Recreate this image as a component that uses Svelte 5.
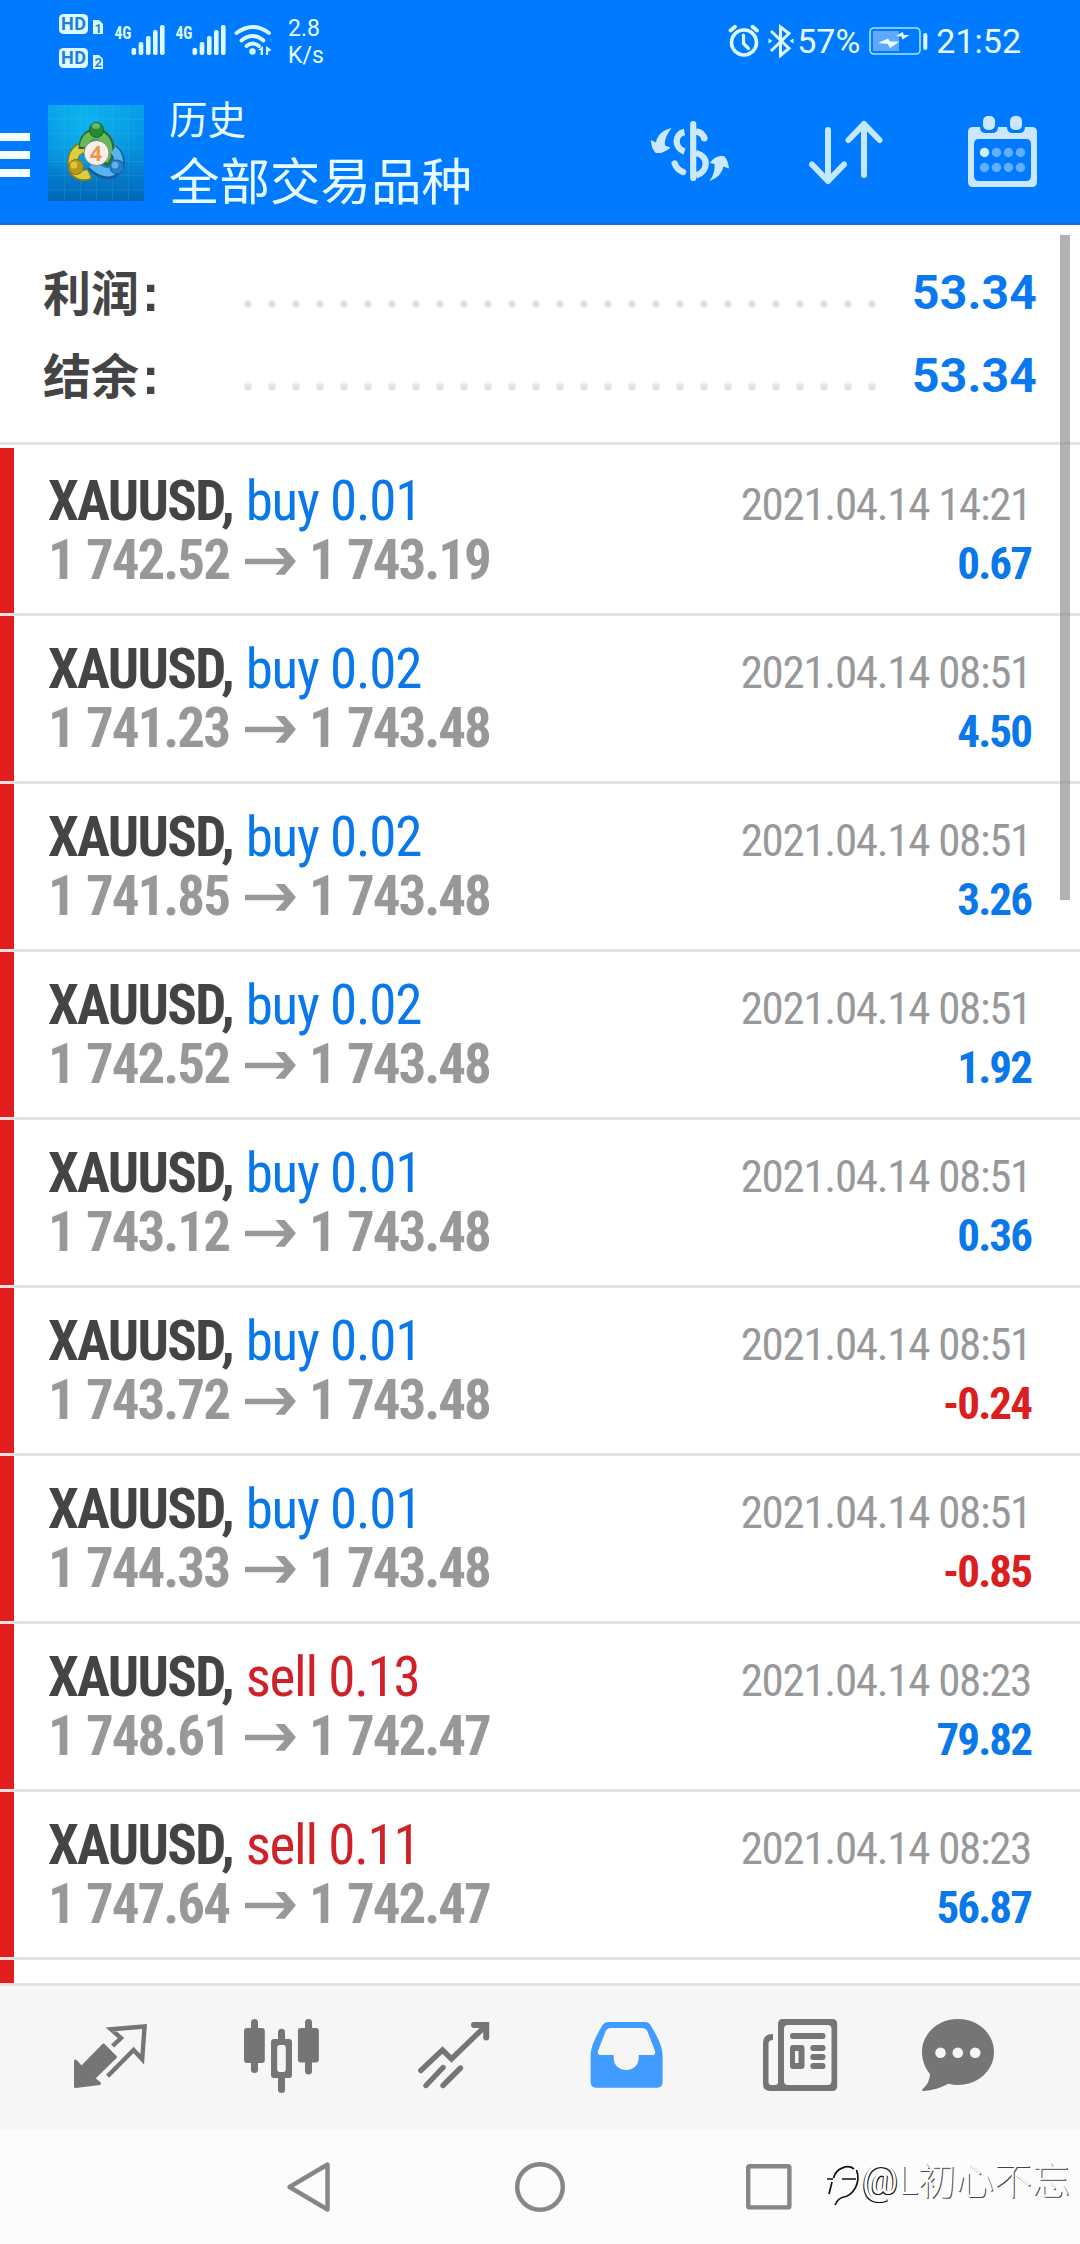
<script>
    const deals = [
        { symbol: 'XAUUSD', side: 'buy', volume: '0.01', open: '1 742.52', close: '1 743.19', time: '2021.04.14 14:21', profit: '0.67' },
        { symbol: 'XAUUSD', side: 'buy', volume: '0.02', open: '1 741.23', close: '1 743.48', time: '2021.04.14 08:51', profit: '4.50' },
        { symbol: 'XAUUSD', side: 'buy', volume: '0.02', open: '1 741.85', close: '1 743.48', time: '2021.04.14 08:51', profit: '3.26' },
        { symbol: 'XAUUSD', side: 'buy', volume: '0.02', open: '1 742.52', close: '1 743.48', time: '2021.04.14 08:51', profit: '1.92' },
        { symbol: 'XAUUSD', side: 'buy', volume: '0.01', open: '1 743.12', close: '1 743.48', time: '2021.04.14 08:51', profit: '0.36' },
        { symbol: 'XAUUSD', side: 'buy', volume: '0.01', open: '1 743.72', close: '1 743.48', time: '2021.04.14 08:51', profit: '-0.24' },
        { symbol: 'XAUUSD', side: 'buy', volume: '0.01', open: '1 744.33', close: '1 743.48', time: '2021.04.14 08:51', profit: '-0.85' },
        { symbol: 'XAUUSD', side: 'sell', volume: '0.13', open: '1 748.61', close: '1 742.47', time: '2021.04.14 08:23', profit: '79.82' },
        { symbol: 'XAUUSD', side: 'sell', volume: '0.11', open: '1 747.64', close: '1 742.47', time: '2021.04.14 08:23', profit: '56.87' }
    ];

    const totals = [
        { label: '利润', value: '53.34' },
        { label: '结余', value: '53.34' }
    ];

    const dots = Array.from({ length: 27 }, (_, i) => 4 + i * 24);
    const bars = [
        { x: 81.5, h: 7 },
        { x: 88.7, h: 13 },
        { x: 96, h: 19 },
        { x: 103, h: 25 },
        { x: 110, h: 30 }
    ];
</script>

<div class="screen">
    <header>
        <div class="status">
            <svg class="signals" width="226" height="66" viewBox="0 0 226 66" fill="#dcfaff">
                <rect x="9" y="6" width="29" height="20" rx="4.5" />
                <rect x="9" y="40" width="29" height="20" rx="4.5" />
                <text class="hd" x="11" y="22.3" textLength="25">HD</text>
                <text class="hd" x="11" y="56.3" textLength="25">HD</text>
                <path d="M43 12h6l4 4v10h-10zM43 47h6l4 4v10h-10z" />
                <text class="sim" x="44.6" y="24.6">1</text>
                <text class="sim" x="44.6" y="59.4">2</text>
                {#each [0, 61] as shift}
                    <text class="net" x={64.5 + shift} y="30.5" textLength="17" lengthAdjust="spacingAndGlyphs">4G</text>
                    {#each bars as bar}
                        <rect x={bar.x + shift} y={47 - bar.h} width="4.6" height={bar.h} rx="1.8" />
                    {/each}
                {/each}
                <circle cx="202.5" cy="43.5" r="3.2" />
                <path d="M186.5 25q16-12 32.500 0M191.500 32.500q11-9 22 0M196.500 38q6-5 12.500 0" fill="none" stroke="#dcfaff" stroke-width="3.8" stroke-linecap="round" />
                <path d="M208 42l5-4v9h-2.400v-5zM216 38v9h2v-3l3.500-2z" />
            </svg>
            <div class="speed">2.8<br />K/s</div>
            <div class="statusRight">
                <svg width="32" height="34" viewBox="0 0 32 34" fill="none" stroke="#dcfaff" stroke-linecap="round">
                    <circle cx="16" cy="18.500" r="12.500" stroke-width="3.600" />
                    <path d="M15.500 11v8.500l5 5" stroke-width="3.200" stroke-linejoin="round" />
                    <path d="M2.500 6.500l4.500-3.700M29 6.500l-4.500-3.700" stroke-width="3.800" />
                </svg>
                <svg class="bluetooth" width="26" height="34" viewBox="0 0 26 34" fill="none" stroke="#dcfaff" stroke-width="3">
                    <path d="M3 7l18 17.500-8.500 7V3l8.500 6.500L3 27" />
                    <path d="M.5 14.500l4 2.500-4 2.500zM25.500 14.500l-4 2.500 4 2.500z" fill="#dcfaff" stroke="none" />
                </svg>
                <span>57%</span>
                <svg class="battery" width="60" height="28" viewBox="0 0 60 28" fill="none">
                    <rect x="1" y="1" width="50" height="26" rx="4" stroke="#a8e4ff" stroke-width="1.600" />
                    <rect x="4" y="4" width="26" height="20" fill="#5ea8ff" />
                    <rect x="54.300" y="6" width="4" height="17" rx="2" fill="#dcfaff" />
                    <path d="M9 16l10-4.500 2 3h9.500l-9.500 6.500-2-4zM27 9l6.500-4 1.500 3h5.500l-7 4.500-1-3z" fill="#ecffff" />
                </svg>
                <span>21:52</span>
            </div>
        </div>
        <div class="appbar">
            <div class="menu"><i></i><i></i><i></i></div>
            <svg class="logo" width="96" height="96" viewBox="0 0 96 96">
                <defs>
                    <linearGradient id="sea" x1="0" y1="0" x2="0" y2="1">
                        <stop offset="0" stop-color="#079fea" />
                        <stop offset=".5" stop-color="#068fdb" />
                        <stop offset="1" stop-color="#0267b8" />
                    </linearGradient>
                    <radialGradient id="glow" cx=".4" cy=".2" r=".6">
                        <stop offset="0" stop-color="#12bdf0" stop-opacity=".7" />
                        <stop offset="1" stop-color="#12bdf0" stop-opacity="0" />
                    </radialGradient>
                </defs>
                <rect width="96" height="96" fill="url(#sea)" />
                <rect width="96" height="96" fill="url(#glow)" />
                <path d="M16.500 0v96M32.500 0v96M48.500 0v96M64.500 0v96M80.500 0v96M0 14.500h96M0 28.500h96M0 42.500h96M0 56.500h96M0 70.500h96M0 84.500h96" stroke="#4cc4f5" stroke-opacity=".16" />
                <g fill="none">
                    <path d="M41 43c-13-2-17 7-16 17 0 9 9 13 17 9" stroke="#7d7b16" stroke-width="11" />
                    <path d="M41 43c-12-2-17 7-16 17 0 8 9 12 16 9" stroke="#dccf3f" stroke-width="8.500" />
                    <path d="M36 44c0-11 5-15 12-15 10 0 14 10 13 19-1 5-4 8-6 11" stroke="#286b35" stroke-width="11" />
                    <path d="M36 42c1-9 5-12 12-12 9 0 13 9 12 18l-4 8" stroke="#67ba55" stroke-width="8.500" />
                    <path d="M65 45c6 4 8 13 4 19-8 9-18 4-26-4" stroke="#165a96" stroke-width="11" />
                    <path d="M65 45c6 4 7 13 4 18-8 8-18 3-25-4" stroke="#57b4ed" stroke-width="8.500" />
                </g>
                <ellipse cx="48.500" cy="25" rx="7" ry="7.500" fill="#278a31" stroke="#1b5f2a" />
                <ellipse cx="48" cy="21" rx="4" ry="3" fill="#82c985" opacity=".7" />
                <circle cx="28" cy="62" r="7.500" fill="#bb9918" stroke="#87700f" />
                <circle cx="26" cy="60" r="3.500" fill="#e6cf52" opacity=".8" />
                <circle cx="69" cy="62" r="7" fill="#227fc8" stroke="#145a98" />
                <circle cx="67" cy="60" r="3.500" fill="#7cc4f2" opacity=".7" />
                <circle cx="48.500" cy="48" r="12.500" fill="#f2f0ec" stroke="#8d8b76" />
                <text class="four" x="48" y="55.500" text-anchor="middle">4</text>
            </svg>
            <div class="titles">
                <div class="small">历史</div>
                <div class="big">全部交易品种</div>
            </div>
            <div class="actions">
                <svg width="110" height="90" viewBox="0 0 110 90" fill="#cbe9fd">
                    <path d="M53.200 19v54" stroke="#cbe9fd" stroke-width="6.200" stroke-linecap="round" />
                    <path d="M44.500 27C34 29 34 43 44.500 46.500M56 26.500q7 1 8.500 7.500M56 48c13 3 13 18 0 22.500" fill="none" stroke="#cbe9fd" stroke-width="6.400" />
                    <path d="M64.300 33v.2M34.700 58.500C36 62 39 65.500 43 67" fill="none" stroke="#cbe9fd" stroke-width="6.400" stroke-linecap="round" />
                    <path d="M31.500 23C22 25 17 31 16 37.500L11 35c0 5 2 11 5 13h5c3-1 7-3 9.500-5.500L25 40.500c-1-6.500 3-12.500 6.500-17.500z" />
                    <path d="M69 76c4-4 6-10 5.500-17L70 58c3-5 8-7.500 14-7 3 3 4.500 7 5 12.500l-5.500-2C82 68 77 74 69 76z" />
                </svg>
                <svg width="90" height="90" viewBox="800 105 90 90" fill="none" stroke="#c2e9ff" stroke-width="6" stroke-linecap="round" stroke-linejoin="round">
                    <path d="M828 130v51M812 164.500l16 16.500 16-16.500M864 175v-51M848.500 140l15.500-16 15.500 16" />
                </svg>
                <svg width="70" height="90" viewBox="968 105 70 90" fill="#cbe6ff">
                    <path fill-rule="evenodd" d="M973 127h7q0 6 6 6h6q6 0 6-6h9q0 6 6 6h6q6 0 6-6h7q5 0 5 5v50q0 5-5 5h-59q-5 0-5-5v-50q0-5 5-5zM979 139q-5 0-5 5v32q0 5 5 5h47q5 0 5-5v-32q0-5-5-5z" />
                    <rect x="983" y="116" width="12" height="14" rx="5" />
                    <rect x="1010" y="116" width="12" height="14" rx="5" />
                    {#each [984.5, 996.5, 1008.5, 1020.5] as x, i}
                        <circle cx={x} cy="152.500" r="4.700" fill={i === 0 ? '#cdf2ff' : '#5fb0ff'} />
                        <circle cx={x} cy="167.500" r="4.700" fill="#5fb0ff" />
                    {/each}
                </svg>
            </div>
        </div>
    </header>

    <main>
        <section class="summary">
            {#each totals as total}
                <div class="total">
                    <div class="label">{total.label}<b>:</b></div>
                    <svg width="632" height="8" fill="#e3e3e3">
                        {#each dots as x}
                            <circle cx={x} cy="4" r="3.800" />
                        {/each}
                    </svg>
                    <div class="amount">{total.value}</div>
                </div>
            {/each}
        </section>

        <section class="deals">
            {#each deals as deal}
                <div class="deal">
                    <div class="line">
                        <div class="name">
                            <b>{deal.symbol},</b> <span class={deal.side}>{deal.side} {deal.volume}</span>
                        </div>
                        <div class="time">{deal.time}</div>
                    </div>
                    <div class="line">
                        <div class="prices">
                            <span>{deal.open}</span>
                            <svg width="52" height="27" viewBox="0 0 52 27" fill="#98989a">
                                <path d="M30.300 0h9.300L51 13.300 39.600 26.700h-9.300l9.300-10.400H0v-5.600h39.600z" />
                            </svg>
                            <span>{deal.close}</span>
                        </div>
                        <div class="profit" class:loss={deal.profit.startsWith('-')}>{deal.profit}</div>
                    </div>
                </div>
            {/each}
            <div class="deal"></div>
        </section>
        <div class="scrollbar"></div>
    </main>

    <nav class="tabs">
        <svg width="96" height="96" fill="none" stroke="#757575">
            <path d="M13.500 51l6 6.500 22-22.500 12 12-22 21.500 6 5-24 3z" fill="#757575" stroke-width="3" stroke-linejoin="round" />
            <path d="M50.600 36l8.400-8-10-8.700 33.600-2.800-2.400 32.800-8.600-9.300-26 26.300" stroke-width="4.400" />
        </svg>
        <svg width="96" height="96" fill="#757575">
            <rect x="10" y="18" width="20.800" height="35" rx="3" />
            <rect x="17" y="9" width="7" height="54" rx="3.500" />
            <rect x="63.900" y="18" width="21" height="34.500" rx="3" />
            <rect x="71" y="9" width="7" height="55.500" rx="3.500" />
            <rect x="44" y="18.700" width="7" height="14" rx="3.500" />
            <rect x="44" y="64" width="7" height="19" rx="3.500" />
            <path fill-rule="evenodd" d="M40 29h15q3 0 3 3v33q0 3-3 3H40q-3 0-3-3V32q0-3 3-3zM45.500 35q-2.300 0-2.300 3v21q0 3 2.300 3h4q2.300 0 2.300-3V38q0-3-2.300-3z" />
        </svg>
        <svg width="96" height="96" fill="none" stroke="#757575" stroke-width="5.400" stroke-linecap="round">
            <path d="M14.800 60.500L36.500 40l9 9L80 15.500" stroke-linejoin="miter" />
            <path d="M68 15h12.200v12.500" stroke-width="6" />
            <path d="M20 75.500l17-18M37 75.500l17.500-17.500" />
        </svg>
        <svg width="96" height="96" fill="#409cff">
            <path fill-rule="evenodd" d="M31 12h36q4 0 6 4c6 10 11.600 20 11.600 30v26q0 5.700-5.600 5.700H18.200q-5.600 0-5.600-5.700V46c0-10 5.600-20 11.400-30q2-4 7-4zM33 18q-4 0-5.500 3.500L20 41q-1 4 3 4h12.700v3c0 16 25 16 25 0v-3H74q4 0 3-4l-7.500-19.500Q68 18 64 18z" />
        </svg>
        <svg width="96" height="96" fill="#757575">
            <path fill-rule="evenodd" d="M33 9h49.200q5 0 5 5v62q0 5-5 5H20q-7 0-7-7V33q0-9 10-9v6q-4.500 0-4.500 4v38q0 3 3 3H25q3 0 3-3V14q0-5 5-5zM38 15q-4 0-4 4v52q0 4 4 4h39.500q4 0 4-4V19q0-4-4-4z" />
            <rect x="40" y="23" width="35.500" height="6" rx="3" />
            <path fill-rule="evenodd" d="M43 35h8.500q3 0 3 3v18q0 3-3 3H43q-3 0-3-3V38q0-3 3-3zM45 41v12h3.500V41z" />
            <rect x="60.300" y="35" width="15.200" height="6" rx="3" />
            <rect x="60.300" y="44" width="15.200" height="6" rx="3" />
            <rect x="60.300" y="53" width="15.200" height="6" rx="3" />
        </svg>
        <svg width="96" height="96" fill="#757575">
            <path d="M48 9c20 0 36 14.500 36 33S68 75 48 75q-5 0-9.500-1.200C31 78 22 80.500 13.800 81c-2 0-2-1.600-.6-2.600C17.500 75 19.500 70 20 64 15 58 12 50.500 12 42 12 23.500 28 9 48 9z" />
            <circle cx="30.500" cy="42.700" r="5.300" fill="#f6f6f6" />
            <circle cx="47.800" cy="42.700" r="5.300" fill="#f6f6f6" />
            <circle cx="65.200" cy="42.700" r="5.300" fill="#f6f6f6" />
        </svg>
    </nav>

    <footer>
        <svg width="60" height="60" fill="none" stroke="#868686" stroke-width="4.400" stroke-linejoin="round">
            <path d="M10.500 30L48.500 7.500v45z" />
        </svg>
        <svg width="60" height="60" fill="none" stroke="#868686" stroke-width="4.400">
            <circle cx="30" cy="30" r="22.800" />
        </svg>
        <svg width="60" height="60" fill="none" stroke="#868686" stroke-width="4.400" stroke-linejoin="round">
            <rect x="7.200" y="9.200" width="41.200" height="41.200" rx="1.500" />
        </svg>
        <div class="watermark">
            <svg width="46" height="62" fill="none" stroke="#111" stroke-width="1.700">
                <path d="M11 31h6M17.500 30C20 20 32 16 38 21M26 31h14M16 34l-3 12M40.500 22C45 34 38 48 26 49.500M28 49q-6 1-9 8" />
            </svg>
            <span><b>@</b>L初心不忘</span>
        </div>
    </footer>
</div>

<style>
    :global(body) {
        background: #fff;
    }

    svg {
        display: block;
        flex: none;
    }

    .screen {
        width: 1080px;
        height: 2244px;
        display: flex;
        flex-direction: column;
        overflow: hidden;
        font-family: Roboto, "Noto Sans CJK SC", sans-serif;
    }

    header {
        height: 225px;
        box-sizing: border-box;
        background: #007aff;
        border-bottom: 2px solid #1a6fc4;
        color: #e8fdff;
        flex: none;
    }

    .status {
        display: flex;
        height: 82px;
        padding: 0 59px 0 50px;
    }

    .signals {
        margin-top: 8px;
    }

    .hd {
        font: 700 18px Roboto, sans-serif;
        fill: #1c80dc;
    }

    .sim {
        font: 700 13px Roboto, sans-serif;
        fill: #1c80dc;
    }

    .net {
        font: 700 19px "Roboto Condensed", Roboto, sans-serif;
    }

    .speed {
        margin: 15px 0 0 12px;
        font-size: 23px;
        line-height: 27px;
    }

    .statusRight {
        display: flex;
        align-items: center;
        height: 82px;
        margin-left: auto;
        font-size: 34px;
    }

    .statusRight span {
        line-height: 40px;
    }

    .bluetooth {
        margin: 0 3px 0 8px;
    }

    .battery {
        margin: 0 7px 0 9px;
    }

    .appbar {
        display: flex;
        height: 141px;
    }

    .menu {
        display: flex;
        flex-direction: column;
        gap: 10px;
        margin-top: 51px;
        width: 30px;
    }

    .menu i {
        height: 8px;
        background: #f4ffff;
    }

    .logo {
        margin: 23px 25px 0 18px;
    }

    .four {
        font: 700 21px "Open Sans", sans-serif;
        fill: #ee9648;
    }

    .small {
        margin-top: 18px;
        font-size: 38.5px;
        line-height: 42px;
    }

    .big {
        margin-top: 11px;
        font-size: 50.5px;
        line-height: 60px;
    }

    .actions {
        display: flex;
        margin: 23px 42px 0 auto;
    }

    .actions svg:nth-child(2) {
        margin: 0 78px 0 50px;
    }

    main {
        position: relative;
        flex: 1;
        display: flex;
        flex-direction: column;
        min-height: 0;
        background: #fff;
    }

    .summary {
        height: 220px;
        box-sizing: border-box;
        padding: 25px 43px 0 43px;
        border-bottom: 3px solid #e3e3e3;
        flex: none;
    }

    .total {
        display: flex;
        align-items: center;
        height: 83px;
    }

    .label {
        width: 201px;
        padding-top: 4px;
        font-size: 48px;
        font-weight: 700;
        line-height: 60px;
        color: #444;
    }

    .label b {
        margin-left: 3px;
        font-family: "Liberation Sans", sans-serif;
        font-size: 52px;
    }

    .total svg {
        margin-top: 25px;
    }

    .amount {
        margin-left: auto;
        padding-top: 2px;
        font-size: 48px;
        font-weight: 700;
        letter-spacing: 0.2px;
        color: #0a78f0;
    }

    .deals {
        flex: 1;
        min-height: 0;
        overflow: hidden;
        padding-top: 3px;
        font-family: "Roboto Condensed", Roboto, sans-serif;
    }

    .deal {
        height: 168px;
        box-sizing: border-box;
        padding: 24px 49px 0 48px;
        border-bottom: 3px solid #e3e3e3;
        background: linear-gradient(90deg, #e31e1e 14px, #fff 14px) no-repeat;
    }

    .line {
        display: flex;
        justify-content: space-between;
        align-items: baseline;
        height: 59px;
        line-height: 59px;
        font-size: 55px;
    }

    .name b {
        color: #444;
        letter-spacing: -1.7px;
    }

    .name span {
        letter-spacing: -1.2px;
    }

    .buy {
        color: #0a78e8;
    }

    .sell {
        color: #d02028;
    }

    .time, .profit {
        font-size: 45px;
        line-height: 50px;
    }

    .time {
        color: #98989a;
        letter-spacing: -1.3px;
    }

    .profit {
        font-weight: 700;
        letter-spacing: -1.9px;
        color: #0a78e8;
    }

    .profit.loss {
        color: #d9201f;
    }

    .prices {
        display: flex;
        align-items: baseline;
        font-weight: 700;
        letter-spacing: -2px;
        word-spacing: 1.5px;
        color: #98989a;
    }

    .prices svg {
        margin: 0 12px 10px 16px;
        transform: translateY(-4px);
    }

    .scrollbar {
        position: absolute;
        top: 10px;
        right: 10px;
        width: 10px;
        height: 665px;
        background: rgba(130, 130, 130, 0.62);
    }

    .tabs {
        display: flex;
        height: 147px;
        box-sizing: border-box;
        padding: 24px 62px 0 62px;
        border-top: 3px solid #e3e3e3;
        background: #f6f6f6;
        flex: none;
    }

    .tabs svg {
        margin-right: 76px;
    }

    .tabs svg:nth-child(5) {
        margin-right: 64px;
    }

    .tabs svg:last-child {
        margin-right: 0;
    }

    footer {
        position: relative;
        display: flex;
        align-items: center;
        gap: 171px;
        height: 114px;
        padding-left: 279px;
        background: #fcfcfc;
        flex: none;
    }

    .watermark {
        position: absolute;
        left: 816px;
        top: 18px;
        display: flex;
        width: 264px;
        white-space: nowrap;
        font: 300 38px/60px "Noto Sans CJK SC", sans-serif;
        color: #fff;
        text-shadow: 1px 1px 0 #444;
    }

    .watermark b {
        font-family: Roboto, sans-serif;
        font-weight: 400;
        font-size: 40px;
        text-shadow: 1px 1px 0 #111, -1px 1px 0 #111;
    }
</style>
